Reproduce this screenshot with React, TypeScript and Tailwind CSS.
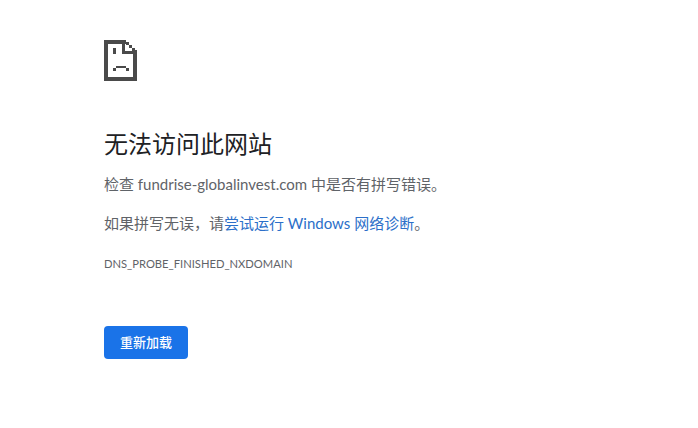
export default function App() {
  return (
    <div className="min-h-[428px] bg-white pl-[104px] pt-[40px] font-['Lato','Noto_Sans_CJK_SC',sans-serif] text-[15px] text-[#5f6368]">
      <svg width="33" height="41" viewBox="0 0 33 41" className="block" shapeRendering="crispEdges">
        <g fill="#4a4a4a">
          <rect x="0" y="0" width="22" height="4" />
          <rect x="0" y="0" width="4" height="41" />
          <rect x="0" y="37" width="33" height="4" />
          <rect x="29" y="10" width="4" height="31" />
          <rect x="18" y="0" width="3" height="14" />
          <rect x="18" y="11" width="15" height="3" />
          <rect x="22" y="2" width="3" height="3" />
          <rect x="25" y="5" width="3" height="3" />
          <rect x="28" y="8" width="3" height="3" />
          <rect x="9" y="8" width="3" height="6" />
          <rect x="12" y="26" width="10" height="2" />
          <rect x="9" y="28" width="3" height="3" />
          <rect x="22" y="28" width="3" height="3" />
        </g>
      </svg>
      <h1 className="mt-[47px] text-[24px] leading-[32px] font-normal text-[#202124]">无法访问此网站</h1>
      <p className="mt-[12px] leading-[24px]">检查 fundrise-globalinvest.com 中是否有拼写错误。</p>
      <p className="mt-[15px] leading-[24px]">
        如果拼写无误，请<span className="text-[#2b6fc9]">尝试运行 Windows 网络诊断</span>。
      </p>
      <div className="mt-[21px] text-[11.2px] leading-[16px] uppercase">DNS_PROBE_FINISHED_NXDOMAIN</div>
      <button className="mt-[54px] block h-[33px] w-[84px] rounded-[4px] bg-[#1a73e8] text-[13px] font-medium text-white">重新加载</button>
    </div>
  );
}
